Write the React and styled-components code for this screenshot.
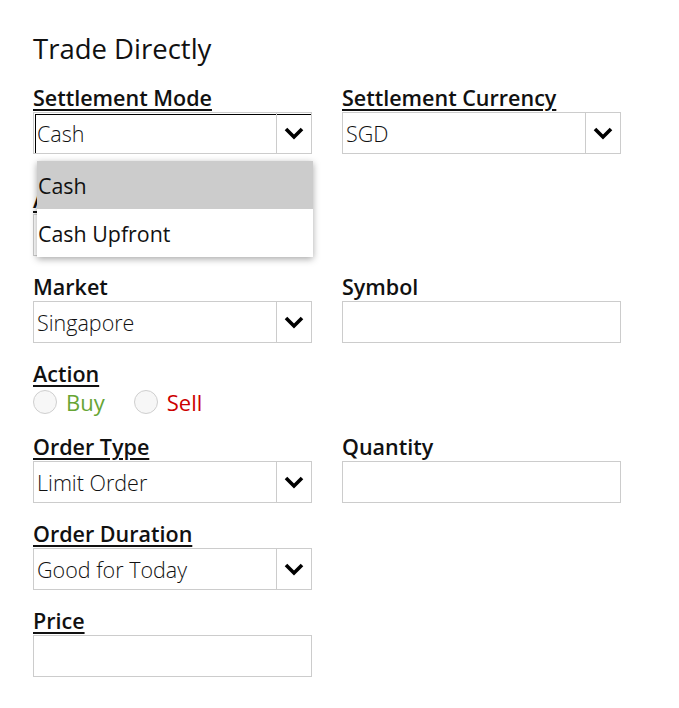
import React from "react";
import styled, { createGlobalStyle } from "styled-components";

const Global = createGlobalStyle`
  html, body { margin: 0; padding: 0; background: #fff; }
  body { font-family: "Open Sans", "Noto Sans", sans-serif; color: #000; }
`;

const Page = styled.div`
  padding: 31px 0 30px 33px;
  width: 588px;
`;

const Title = styled.h1`
  margin: 0 0 17px 0;
  font-size: 27.5px;
  font-weight: 400;
  line-height: 36px;
  color: #111;
`;

const Grid = styled.div`
  display: grid;
  grid-template-columns: 279px 279px;
  column-gap: 30px;
`;

const Field = styled.div`
  position: relative;
  display: flex;
  flex-direction: column;
  grid-column: ${(p) => (p.$col ? p.$col : "auto")};
  margin-bottom: ${(p) => (p.$mb != null ? p.$mb : 17)}px;
`;

const Label = styled.label`
  font-size: 21.5px;
  font-weight: 600;
  line-height: 28px;
  height: 28px;
  color: #111;
  white-space: nowrap;
  text-decoration: ${(p) => (p.$u ? "underline" : "none")};
  text-decoration-thickness: 2px;
  text-underline-offset: 3px;
`;

const Control = styled.div`
  box-sizing: border-box;
  height: 42px;
  border: 1px solid #ccc;
  background: #fff;
  display: flex;
  align-items: stretch;
  box-shadow: ${(p) =>
    p.$focused ? "inset 1px 1px 0 #fff, inset 2px 2px 0 #000" : "none"};
`;

const Value = styled.div`
  flex: 1;
  display: flex;
  align-items: center;
  padding-left: 3px;
  font-size: 21.5px;
  font-weight: 300;
  color: #111;
  white-space: nowrap;
`;

const ArrowCell = styled.div`
  width: 34px;
  border-left: 1px solid #ccc;
  display: flex;
  align-items: center;
  justify-content: center;
`;

const Menu = styled.div`
  position: absolute;
  left: 4px;
  top: 77px;
  width: 276px;
  background: #fff;
  box-shadow: 0 2px 7px rgba(0, 0, 0, 0.35);
  z-index: 5;
`;

const MenuItem = styled.div`
  height: 48px;
  display: flex;
  align-items: center;
  padding-left: 1px;
  font-size: 21.4px;
  font-weight: 400;
  color: #111;
  background: ${(p) => (p.$active ? "#cccccc" : "#fff")};
`;

const RadioRow = styled.div`
  display: flex;
  align-items: center;
  height: 28px;
  gap: 29px;
`;

const RadioOption = styled.div`
  display: flex;
  align-items: center;
  gap: 9px;
  font-size: 22px;
  font-weight: 400;
  color: ${(p) => p.$color};
`;

const RadioCircle = styled.span`
  box-sizing: border-box;
  width: 24px;
  height: 24px;
  border-radius: 50%;
  border: 1px solid #cfcfcf;
  background: #f7f7f7;
`;

const Chevron = () => (
  <svg width="20" height="13" viewBox="0 0 20 13">
    <path d="M2 2 L10 10 L18 2" fill="none" stroke="#000" strokeWidth="3.6" />
  </svg>
);

const Select = ({ value, focused }) => (
  <Control $focused={focused}>
    <Value>{value}</Value>
    <ArrowCell>
      <Chevron />
    </ArrowCell>
  </Control>
);

export default function App() {
  return (
    <>
      <Global />
      <Page>
        <Title>Trade Directly</Title>
        <Grid>
          <Field $mb={32}>
            <Label $u>Settlement Mode</Label>
            <Select value="Cash" focused />
            <Menu>
              <MenuItem $active>Cash</MenuItem>
              <MenuItem>Cash Upfront</MenuItem>
            </Menu>
          </Field>
          <Field $mb={32}>
            <Label $u>Settlement Currency</Label>
            <Select value="SGD" />
          </Field>

          <Field $col="1">
            <Label $u>Account</Label>
            <Control />
          </Field>

          <Field $col="1">
            <Label>Market</Label>
            <Select value="Singapore" />
          </Field>
          <Field>
            <Label>Symbol</Label>
            <Control />
          </Field>

          <Field $col="1">
            <Label $u>Action</Label>
            <RadioRow>
              <RadioOption $color="#67a534">
                <RadioCircle />
                Buy
              </RadioOption>
              <RadioOption $color="#cc0000">
                <RadioCircle />
                Sell
              </RadioOption>
            </RadioRow>
          </Field>

          <Field $col="1">
            <Label $u>Order Type</Label>
            <Select value="Limit Order" />
          </Field>
          <Field>
            <Label>Quantity</Label>
            <Control />
          </Field>

          <Field $col="1">
            <Label $u>Order Duration</Label>
            <Select value="Good for Today" />
          </Field>

          <Field $col="1">
            <Label $u>Price</Label>
            <Control />
          </Field>
        </Grid>
      </Page>
    </>
  );
}
